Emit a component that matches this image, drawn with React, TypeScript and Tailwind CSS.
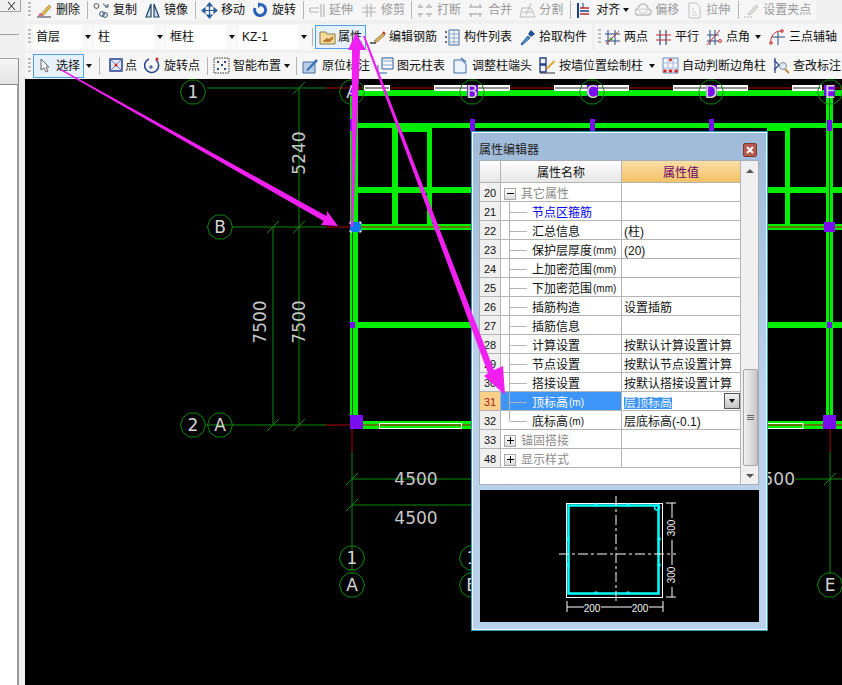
import type { ReactNode } from "react";
import clsx from "clsx";

const FONT = "font-['Liberation_Sans','Noto_Sans_CJK_SC',sans-serif]";

function Grip() {
  return <span className="h-[16px] w-[3px] shrink-0 bg-[repeating-linear-gradient(to_bottom,#bcbcbc_0px,#bcbcbc_2px,transparent_2px,transparent_4px)]" />;
}

function Sep({ cls }: { cls: string }) {
  return <span className={clsx("h-[18px] w-px shrink-0 bg-[#b4b4b4]", cls)} />;
}

function Caret({ cls }: { cls?: string }) {
  return <span className={clsx("h-0 w-0 shrink-0 border-x-[3px] border-t-[4px] border-x-transparent border-t-[#111]", cls)} />;
}

function Ico({ children }: { children: ReactNode }) {
  return (
    <svg width="17" height="17" viewBox="0 0 17 17" fill="none">
      {children}
    </svg>
  );
}

type ToolProps = { cls?: string; icon: ReactNode; label: string; gray?: boolean };

function Tool({ cls, icon, label, gray }: ToolProps) {
  return (
    <div className={clsx("flex shrink-0 items-center", cls)}>
      <span className="flex w-[20px] items-center">{icon}</span>
      <span className={clsx("whitespace-nowrap text-[12px] leading-none", gray ? "text-[#9a9a9a]" : "text-[#111]")}>{label}</span>
    </div>
  );
}

const icons = {
  erase: <Ico><path d="M1 15h14" stroke="#334" /><path d="M4 13L13 3l2 2-8 9z" fill="#e8b93c" stroke="#776" strokeWidth=".6" /><path d="M2 14l2-3 3 2z" fill="#d04a8a" /></Ico>,
  copy: <Ico><circle cx="3.5" cy="4" r="2.4" stroke="#555" /><circle cx="9" cy="12" r="2.4" stroke="#357" /><circle cx="12" cy="13" r="2.4" stroke="#357" /><path d="M10 2l5 3m0 0V2m0 3h-3" stroke="#357" /></Ico>,
  mirror: <Ico><path d="M7 2L2 15h5zM10 2l5 13h-5z" stroke="#246" strokeWidth="1.2" fill="#cfe0f2" /></Ico>,
  move: <Ico><path d="M8.5 1v15M1 8.5h15M8.5 1L6 4h5zM8.5 16L6 13h5zM1 8.5L4 6v5zM16 8.5L13 6v5z" stroke="#2a5f9e" fill="#2a5f9e" strokeWidth="1.2" /></Ico>,
  rotate: <Ico><path d="M8 2.5a5.5 5.5 0 1 1-5 3.5" stroke="#2a62b8" strokeWidth="3" /><path d="M6 0l4 3-4 3z" fill="#2a62b8" /></Ico>,
  extend: <Ico><path d="M1 6h9M1 10h9M1 6v4M12 2v13M15 2v13" stroke="#b5b5b5" strokeWidth="1.2" /></Ico>,
  trim: <Ico><path d="M1 6h14M1 10h14M6 2v13M10 2v13" stroke="#b5b5b5" strokeWidth="1.2" /></Ico>,
  split: <Ico><path d="M1 5h5M9 5h6M1 12h5M9 12h6M3 2v3M12 2v3M3 12v3M12 12v3" stroke="#b5b5b5" strokeWidth="1.4" /></Ico>,
  merge: <Ico><path d="M1 5h13M1 12h13M3 2v3M12 2v3M3 12v3M12 12v3" stroke="#b5b5b5" strokeWidth="1.4" /></Ico>,
  divide: <Ico><path d="M1 15h15L12 6H3zM3 10h10M12 1L7 13" stroke="#bcbcbc" /></Ico>,
  align: <Ico><path d="M2 1v15" stroke="#1c3f8c" strokeWidth="2" /><path d="M4 6h9M4 12h9" stroke="#c02828" strokeWidth="1.5" /><path d="M4 9h9" stroke="#1c3f8c" strokeWidth="1.5" /><path d="M7 1v5" stroke="#1c3f8c" /></Ico>,
  cloud: <Ico><path d="M3 13a3 3 0 0 1 0-6 5 5 0 0 1 10 0 3 3 0 0 1 0 6z" stroke="#bcbcbc" strokeWidth="1.4" /><path d="M6 11a2 2 0 0 1 1-4h3a2 2 0 0 1 0 4z" stroke="#cfcfcf" /></Ico>,
  stretch: <Ico><path d="M3 1h7l4 4v11H3z" stroke="#c0c0c0" /><path d="M6 7h2M6 10h4M6 13h5" stroke="#cfcfcf" /></Ico>,
  grippoint: <Ico><path d="M1 15h9" stroke="#bbb" strokeDasharray="2 1" /><path d="M5 12L13 3l2 2-8 8z" fill="#e4e4e4" stroke="#bbb" /></Ico>,
  prop: <Ico><path d="M1 3h6l1 2h8v10H1z" fill="#f6dc9a" stroke="#8a7a48" /><path d="M4 12l4-3 2 1 4-3v3l-3 3H5z" fill="#b57a2e" /></Ico>,
  rebar: <Ico><path d="M1 14h6" stroke="#333" strokeWidth="1.4" /><path d="M5 12L14 4l2 2-8 7z" fill="#e5b54a" stroke="#555" strokeWidth=".6" /><path d="M14 3l2 2" stroke="#c53030" strokeWidth="2" /></Ico>,
  list: <Ico><path d="M1 2h2v2H1zM1 7h2v2H1zM1 12h2v2H1z" fill="#667" /><path d="M5 1h10v15H5z" stroke="#3a6ea8" /><path d="M5 5h10M5 9h10M5 13h10M10 1v15" stroke="#8aa8c8" /></Ico>,
  pick: <Ico><path d="M2 15l7-8 2 2-8 7z" fill="#5b9ad8" stroke="#1d4f8a" /><path d="M9 5l3-4 4 4-4 3z" fill="#1d4f8a" /></Ico>,
  twopt: <Ico><path d="M4 1v15M11 1v15M1 5h15M1 12h15" stroke="#2a4a82" /><path d="M2 15L15 2" stroke="#c53030" /><circle cx="7" cy="10" r="1.6" fill="#4c9a3c" /></Ico>,
  parallel: <Ico><path d="M5 1v15M11 1v15" stroke="#2a4a82" strokeWidth="1.2" /><path d="M1 6h15M1 11h15" stroke="#c53030" strokeWidth="1.2" /></Ico>,
  angle: <Ico><path d="M4 1v15M9 1v15M1 6h12M1 12h12" stroke="#2a4a82" /><path d="M1 16L14 1" stroke="#c53030" /><circle cx="14" cy="12" r="1.5" stroke="#c53030" /></Ico>,
  arc: <Ico><path d="M9 2v14M3 8h13" stroke="#2a4a82" /><path d="M2 14a10 10 0 0 1 11-12" stroke="#c53030" /><circle cx="2" cy="14" r="1.3" stroke="#c53030" /><circle cx="13" cy="2" r="1.3" stroke="#c53030" /></Ico>,
  cursor: <svg width="10" height="15" viewBox="0 0 10 15"><path d="M1 1v11l3-2 2 4 2-1-2-4h3z" fill="#f4f4f4" stroke="#666" /></svg>,
  point: <Ico><path d="M2 2h12v12H2z" stroke="#24408a" strokeWidth="1.5" fill="#dfe7f6" /><path d="M2 2l12 12M14 2L2 14" stroke="#7788b0" /><circle cx="8" cy="8" r="1.5" fill="#d02020" /></Ico>,
  rotpt: <Ico><path d="M5 2a7 7 0 1 0 7 1" stroke="#24408a" strokeWidth="1.5" /><path d="M9 10h-4M7 8v4" stroke="#24408a" /><circle cx="13" cy="2" r="1.6" fill="#c53030" /></Ico>,
  smart: <Ico><path d="M1 1h15v15H1z" stroke="#333" strokeDasharray="1.5 1" /><path d="M4 5h2M11 5h2M4 12h2M11 12h2M8 8h2" stroke="#2a4a82" strokeWidth="2" /></Ico>,
  insitu: <Ico><path d="M1 5h12v11H1z" fill="#b9cee6" stroke="#4a6f9e" /><path d="M4 13L14 2l2 2-10 10z" fill="#3f74b8" /></Ico>,
  table: <Ico><path d="M5 1h11v11H5z" stroke="#2a5a9e" /><path d="M5 4h11M5 8h11" stroke="#88a8cc" /><path d="M1 8v8h9" stroke="#2a5a9e" /></Ico>,
  end: <Ico><path d="M2 3h7l5 4v9H2z" stroke="#3a6ea8" fill="#eef4fb" /><path d="M9 1l5 4" stroke="#3a6ea8" strokeWidth="1.5" /></Ico>,
  wall: <Ico><path d="M1 1h6v6H1zM1 8h6v7H1z" stroke="#24408a" strokeWidth="1.4" /><path d="M7 11L15 3l1 2-8 8z" fill="#e2a53a" /><path d="M1 16h15" stroke="#333" /></Ico>,
  auto: <Ico><path d="M1 1h15v15H1z" stroke="#6b8cc0" /><path d="M1 6h15M1 11h15M6 1v15M11 1v15" stroke="#a8bcdc" /><circle cx="3" cy="14" r="1.7" fill="#d02020" /><circle cx="8.5" cy="14" r="1.7" fill="#d02020" /><circle cx="14" cy="14" r="1.7" fill="#d02020" /><circle cx="8.5" cy="3" r="1.4" fill="#d02020" /></Ico>,
  check: <Ico><path d="M2 1v15M1 3l5 5-5 5" stroke="#24408a" strokeWidth="1.2" /><circle cx="10" cy="9" r="3.5" stroke="#889" fill="#dcebf8" /><path d="M12 12l4 4" stroke="#c08a3a" strokeWidth="2" /></Ico>,
};

function Combo({ label, cls }: { label: string; cls: string }) {
  return (
    <div className="flex h-[24px] shrink-0 items-stretch">
      <span className={clsx("flex items-center bg-white pl-[3px] text-[12px] text-[#111]", cls)}>{label}</span>
      <span className="flex w-[12px] items-center bg-[#f8f8f8] pl-[3px]"><Caret /></span>
    </div>
  );
}

function ToolRow1() {
  return (
    <div className="flex h-[20px] w-[791px] items-center bg-[#f6f6f7] pl-[3px]">
      <Grip />
      <Tool cls="ml-[5px]" icon={icons.erase} label="删除" />
      <Sep cls="ml-[7px]" />
      <Tool cls="ml-[5px]" icon={icons.copy} label="复制" />
      <Tool cls="ml-[7px]" icon={icons.mirror} label="镜像" />
      <Sep cls="ml-[7px]" />
      <Tool cls="ml-[5px]" icon={icons.move} label="移动" />
      <Tool cls="ml-[7px]" icon={icons.rotate} label="旋转" />
      <Sep cls="ml-[7px]" />
      <Tool cls="ml-[5px]" icon={icons.extend} label="延伸" gray />
      <Tool cls="ml-[8px]" icon={icons.trim} label="修剪" gray />
      <Sep cls="ml-[6px]" />
      <Tool cls="ml-[5px]" icon={icons.split} label="打断" gray />
      <Tool cls="ml-[7px]" icon={icons.merge} label="合并" gray />
      <Tool cls="ml-[7px]" icon={icons.divide} label="分割" gray />
      <Sep cls="ml-[7px]" />
      <Tool cls="ml-[5px]" icon={icons.align} label="对齐" />
      <Caret cls="ml-[3px]" />
      <Tool cls="ml-[6px]" icon={icons.cloud} label="偏移" gray />
      <Tool cls="ml-[7px]" icon={icons.stretch} label="拉伸" gray />
      <Sep cls="ml-[8px]" />
      <Tool cls="ml-[4px]" icon={icons.grippoint} label="设置夹点" gray />
    </div>
  );
}

function ToolRow2() {
  return (
    <div className="mt-[4px] flex h-[26px] items-center">
      <div className="flex h-full w-[567px] items-center bg-[#f6f6f7] pl-[3px]">
        <Grip />
        <div className="ml-[2px] flex items-center gap-px">
          <Combo label="首层" cls="w-[49px]" />
          <Combo label="柱" cls="w-[59px]" />
          <Combo label="框柱" cls="w-[59px]" />
          <Combo label="KZ-1" cls="w-[59px]" />
        </div>
        <Sep cls="ml-[2px]" />
        <div className="ml-[2px] flex h-[24px] w-[51px] items-center border border-[#4c9fe8] bg-[#e6f1fb] pl-[3px]">
          <span className="flex w-[19px] items-center">{icons.prop}</span>
          <span className="text-[12px] leading-none text-[#111]">属性</span>
        </div>
        <Tool cls="ml-[3px]" icon={icons.rebar} label="编辑钢筋" />
        <Tool cls="ml-[7px]" icon={icons.list} label="构件列表" />
        <Tool cls="ml-[7px]" icon={icons.pick} label="拾取构件" />
      </div>
      <div className="ml-[3px] flex h-full flex-1 items-center bg-[#f6f6f7] pl-[3px]">
        <Grip />
        <Tool cls="ml-[3px]" icon={icons.twopt} label="两点" />
        <Tool cls="ml-[7px]" icon={icons.parallel} label="平行" />
        <Tool cls="ml-[7px]" icon={icons.angle} label="点角" />
        <Caret cls="ml-[5px]" />
        <Tool cls="ml-[8px]" icon={icons.arc} label="三点辅轴" />
      </div>
    </div>
  );
}

function ToolRow3() {
  return (
    <div className="mt-[3px] flex h-[25px] items-center bg-[#f6f6f7] pl-[3px]">
      <Grip />
      <div className="ml-[2px] flex h-[24px] w-[51px] shrink-0 items-center border border-[#4c9fe8] bg-[#e6f1fb] pl-[6px]">
        <span className="flex w-[16px] items-center">{icons.cursor}</span>
        <span className="text-[12px] leading-none text-[#111]">选择</span>
      </div>
      <Caret cls="ml-[2px]" />
      <Sep cls="ml-[7px]" />
      <Tool cls="ml-[8px] w-[29px]" icon={icons.point} label="点" />
      <Tool cls="ml-[7px]" icon={icons.rotpt} label="旋转点" />
      <Sep cls="ml-[7px]" />
      <Tool cls="ml-[5px]" icon={icons.smart} label="智能布置" />
      <Caret cls="ml-[3px]" />
      <Sep cls="ml-[6px]" />
      <Tool cls="ml-[5px]" icon={icons.insitu} label="原位标注" />
      <Tool cls="ml-[7px]" icon={icons.table} label="图元柱表" />
      <Tool cls="ml-[7px]" icon={icons.end} label="调整柱端头" />
      <Tool cls="ml-[7px]" icon={icons.wall} label="按墙位置绘制柱" />
      <Caret cls="ml-[6px]" />
      <Tool cls="ml-[7px]" icon={icons.auto} label="自动判断边角柱" />
      <Tool cls="ml-[7px]" icon={icons.check} label="查改标注" />
    </div>
  );
}

function Bubble({ x, y, t }: { x: number; y: number; t: string }) {
  const pts = Array.from({ length: 10 }, (_, i) => {
    const a = (i / 10) * Math.PI * 2;
    return `${x + 12.5 * Math.cos(a)},${y + 12.5 * Math.sin(a)}`;
  }).join(" ");
  return (
    <g>
      <polygon points={pts} fill="none" stroke="#0b8a0b" />
      <text x={x} y={y + 6} textAnchor="middle" fontSize="17" fill="#d4d4d4" fontFamily="DejaVu Sans, sans-serif">{t}</text>
    </g>
  );
}

function Tick({ x, y }: { x: number; y: number }) {
  return <path d={`M${x - 6} ${y + 6}L${x + 6} ${y - 6}`} stroke="#0b8a0b" />;
}

function Dim({ x, y, t, rot, anchor }: { x: number; y: number; t: string; rot?: boolean; anchor?: "end" }) {
  return (
    <text
      x={x}
      y={y}
      transform={rot ? `rotate(-90 ${x} ${y})` : undefined}
      textAnchor={anchor ?? "middle"}
      dominantBaseline="central"
      fontSize="17"
      fill="#c8c8c8"
      fontFamily="DejaVu Sans, sans-serif"
    >
      {t}
    </text>
  );
}

const GREEN = "#00ee00";
const PURPLE = "#7a0cf0";
const RED = "#c00000";
const AXIS = "#0b8a0b";

function Canvas() {
  const whites: [number, number][] = [[364, 390], [434, 510], [554, 629], [673, 748], [792, 822]];
  const beamXs = [472, 592, 711];
  return (
    <svg className="block h-[606px] w-[817px] bg-black" viewBox="25 79 817 606">
      {/* axes */}
      <path d="M207 88H326M233 227H326M207 425H326M299 88V425M273 227V425M352 452V570M830 452V573M352 479H472M352 505H472M795 479H842" stroke={AXIS} fill="none" />
      <path d="M326 88H842M326 227H350M326 425H352M352 428V452M830 428V452" stroke={RED} fill="none" opacity=".9" />
      <Tick x={299} y={88} />
      <Tick x={273} y={227} />
      <Tick x={299} y={227} />
      <Tick x={273} y={425} />
      <Tick x={299} y={425} />
      <Tick x={352} y={479} />
      <Tick x={352} y={505} />
      <Tick x={830} y={479} />

      {/* beams */}
      <rect x="352" y="90" width="490" height="6" fill={GREEN} />
      <rect x="350" y="90" width="8" height="335" fill={GREEN} />
      <rect x="826" y="90" width="7" height="335" fill={GREEN} />
      <rect x="356" y="123" width="486" height="5" fill={GREEN} />
      <rect x="392" y="128" width="40" height="4" fill={GREEN} />
      <rect x="767" y="128" width="23" height="3" fill={GREEN} />
      <rect x="356" y="187" width="486" height="6" fill={GREEN} />
      <rect x="392" y="128" width="6" height="96" fill={GREEN} />
      <rect x="427" y="128" width="5" height="96" fill={GREEN} />
      <rect x="785" y="128" width="5" height="96" fill={GREEN} />
      <rect x="356" y="224" width="486" height="6" fill={GREEN} />
      <rect x="356" y="322" width="486" height="6" fill={GREEN} />
      <rect x="352" y="421" width="490" height="8" fill={GREEN} />
      <path d="M352.5 96V425M829.5 96V425" stroke="#064d06" />
      <path d="M356 227H842M352 425H842" stroke={RED} />

      {/* white bars */}
      {whites.map(([a, b]) => (
        <g key={a}>
          <rect x={a} y="85" width={b - a} height="6" fill="#fff" />
          <rect x={a + 1} y="87.5" width={b - a - 2} height="1" fill="#222" />
        </g>
      ))}
      <rect x="379.5" y="423.5" width="82" height="5" fill="none" stroke="#fff" />
      <rect x="760" y="423.5" width="43" height="5" fill="none" stroke="#fff" />

      {/* columns */}
      {beamXs.map((x) => (
        <g key={x}>
          <rect x={x - 5} y="85" width="11" height="11" fill={PURPLE} />
          <rect x={x - 2} y="119" width="5" height="12" fill={PURPLE} />
        </g>
      ))}
      <rect x="824" y="85" width="11" height="11" fill={PURPLE} />
      <rect x="827" y="120" width="5" height="11" fill={PURPLE} />
      <rect x="824" y="222" width="11" height="10" fill={PURPLE} />
      <rect x="827" y="322" width="5" height="6" fill={PURPLE} />
      <rect x="823" y="415" width="13" height="14" fill={PURPLE} />
      <rect x="350" y="85" width="5" height="11" fill={PURPLE} />
      <rect x="350" y="119" width="3" height="12" fill={PURPLE} />
      <rect x="350" y="322" width="5" height="6" fill={PURPLE} />
      <rect x="350" y="415" width="13" height="14" fill={PURPLE} />
      <rect x="350" y="222" width="11" height="10" fill="#0a78f0" />
      <path d="M350 224v-2h2M361 224v-2h-2M350 230v2h2M361 230v2h-2" stroke="#fff" fill="none" />

      {/* bubbles */}
      <Bubble x={193} y={92} t="1" />
      <Bubble x={220} y={227} t="B" />
      <Bubble x={193} y={425} t="2" />
      <Bubble x={220} y={425} t="A" />
      <Bubble x={352} y={92} t="A" />
      <Bubble x={472} y={92} t="B" />
      <Bubble x={592} y={92} t="C" />
      <Bubble x={711} y={92} t="D" />
      <Bubble x={830} y={92} t="E" />
      <Bubble x={352} y={558} t="1" />
      <Bubble x={352} y={585} t="A" />
      <Bubble x={472} y={558} t="1" />
      <Bubble x={472} y={585} t="B" />
      <Bubble x={830} y={585} t="E" />

      <Dim x={299} y={153} t="5240" rot />
      <Dim x={260} y={322} t="7500" rot />
      <Dim x={299} y={322} t="7500" rot />
      <Dim x={416} y={479} t="4500" />
      <Dim x={416} y={518} t="4500" />
      <Dim x={795} y={479} t="4500" anchor="end" />
    </svg>
  );
}

type Row = { no: number; name: string; unit?: string; value?: string; kind?: "group" | "groupClosed" | "link" | "selected"; last?: boolean };

const rows: Row[] = [
  { no: 20, name: "其它属性", kind: "group" },
  { no: 21, name: "节点区箍筋", kind: "link" },
  { no: 22, name: "汇总信息", value: "(柱)" },
  { no: 23, name: "保护层厚度", unit: "(mm)", value: "(20)" },
  { no: 24, name: "上加密范围", unit: "(mm)" },
  { no: 25, name: "下加密范围", unit: "(mm)" },
  { no: 26, name: "插筋构造", value: "设置插筋" },
  { no: 27, name: "插筋信息" },
  { no: 28, name: "计算设置", value: "按默认计算设置计算" },
  { no: 29, name: "节点设置", value: "按默认节点设置计算" },
  { no: 30, name: "搭接设置", value: "按默认搭接设置计算" },
  { no: 31, name: "顶标高", unit: "(m)", value: "层顶标高", kind: "selected" },
  { no: 32, name: "底标高", unit: "(m)", value: "层底标高(-0.1)", last: true },
  { no: 33, name: "锚固搭接", kind: "groupClosed" },
  { no: 48, name: "显示样式", kind: "groupClosed" },
];

function ExpandBox({ open }: { open: boolean }) {
  return (
    <span className="relative ml-[3px] flex h-[12px] w-[12px] shrink-0 items-center justify-center border border-[#a8a8a8] bg-gradient-to-b from-white to-[#dcdcdc]">
      <span className="h-px w-[7px] bg-black" />
      {!open && <span className="absolute h-[7px] w-px bg-black" />}
    </span>
  );
}

function PropRow({ row }: { row: Row }) {
  const selected = row.kind === "selected";
  const isGroup = row.kind === "group" || row.kind === "groupClosed";
  return (
    <div className="flex h-[19px] border-b border-[#b4b4b4] text-[12px] leading-none text-[#111]">
      <div className={clsx("flex w-[21px] shrink-0 items-center justify-center border-r border-[#b4b4b4] pt-[3px] text-[11px]", selected ? "bg-[#fdd08a] text-[#a02020]" : "bg-[#f0f0f0]")}>
        {row.no}
      </div>
      <div className={clsx("relative flex w-[121px] shrink-0 items-center border-r border-[#b4b4b4] pt-[3px]", selected && "bg-[#3d95f8] text-white")}>
        {isGroup ? (
          <>
            <ExpandBox open={row.kind === "group"} />
            <span className="ml-[5px] text-[#8c8c8c]">{row.name}</span>
          </>
        ) : (
          <>
            <span className={clsx("absolute left-[8px] top-0 w-px bg-[#b4b4b4]", row.last ? "h-[10px]" : "h-full")} />
            <span className="absolute left-[9px] top-[10px] h-px w-[17px] bg-[#b4b4b4]" />
            <span className={clsx("ml-[31px] whitespace-nowrap", row.kind === "link" && "text-[#0000ee]")}>{row.name}</span>
            {row.unit && <span className="ml-px text-[10px]">{row.unit}</span>}
          </>
        )}
      </div>
      <div className="relative flex flex-1 items-center pl-[2px] pt-[3px]">
        {selected ? (
          <>
            <span className="bg-[#3d95f8] text-[#e8f2ff]">{row.value}</span>
            <span className="absolute right-0 top-px flex h-[16px] w-[16px] items-center justify-center border border-[#555] bg-gradient-to-b from-[#f2f2f2] to-[#c4c4c4]">
              <Caret />
            </span>
          </>
        ) : (
          <span className="whitespace-nowrap">{row.value}</span>
        )}
      </div>
    </div>
  );
}

function PropGrid() {
  return (
    <div className="flex h-[325px] w-[280px] border border-[#a6aeb8] bg-white">
      <div className="w-[261px] shrink-0 border-r border-[#b4b4b4]">
        <div className="flex h-[22px] border-b border-[#b4b4b4] text-[12px] leading-none">
          <div className="w-[21px] shrink-0 border-r border-[#b4b4b4] bg-gradient-to-b from-white to-[#e6e6e6]" />
          <div className="flex w-[121px] shrink-0 items-center justify-center border-r border-[#b4b4b4] bg-gradient-to-b from-white to-[#e6e6e6] pt-[3px] text-[#111]">属性名称</div>
          <div className="flex flex-1 items-center justify-center bg-gradient-to-b from-[#fbdea6] to-[#f3c263] pt-[3px] text-[#660066]">属性值</div>
        </div>
        {rows.map((r) => (
          <PropRow key={r.no} row={r} />
        ))}
      </div>
      <div className="flex w-[17px] flex-col items-center bg-[#f0f0f0] pl-px pt-[8px]">
        <span className="h-0 w-0 border-x-[4px] border-b-[4px] border-x-transparent border-b-[#555]" />
        <div className="mt-[196px] flex h-[97px] w-[15px] flex-col items-center justify-center gap-px rounded-[2px] border border-[#a8a8a8] bg-gradient-to-r from-[#f0f0f0] to-[#c8c8c8]">
          <span className="h-px w-[7px] bg-[#666]" />
          <span className="h-px w-[7px] bg-[#666]" />
          <span className="h-px w-[7px] bg-[#666]" />
        </div>
        <span className="mt-[8px] h-0 w-0 border-x-[4px] border-t-[4px] border-x-transparent border-t-[#555]" />
      </div>
    </div>
  );
}

function Section() {
  const bars = [[596, 505], [628, 505], [568, 539], [568, 565], [659, 539], [659, 565], [596, 593], [628, 593]];
  return (
    <svg className="ml-px mt-[5px] block h-[132px] w-[279px] bg-black" viewBox="480 490 279 132">
      <rect x="566.5" y="503.5" width="96" height="94" fill="none" stroke="#fff" />
      <rect x="568.5" y="505.5" width="90" height="88" fill="none" stroke="#00ffff" strokeWidth="2.5" />
      {bars.map(([x, y]) => (
        <circle key={`${x}-${y}`} cx={x} cy={y} r="1.8" fill="#00ffff" />
      ))}
      <circle cx="657" cy="507.5" r="2.5" fill="none" stroke="#00ffff" strokeWidth="1.5" />
      <path d="M616 496V604M559 554H676" stroke="#fff" strokeDasharray="10 3 3 3" />
      <path d="M672 503V597M666 503H676M666 597H676M567 607H663M567 601V612M663 601V612" stroke="#fff" />
      <rect x="664" y="518" width="14" height="22" fill="#000" />
      <rect x="664" y="565" width="14" height="22" fill="#000" />
      <rect x="584" y="602" width="17" height="11" fill="#000" />
      <rect x="632" y="602" width="17" height="11" fill="#000" />
      <text x="671" y="528" transform="rotate(-90 671 528)" textAnchor="middle" dominantBaseline="central" fontSize="10" fill="#f2f2f2" fontFamily="Liberation Sans, sans-serif">300</text>
      <text x="671" y="575" transform="rotate(-90 671 575)" textAnchor="middle" dominantBaseline="central" fontSize="10" fill="#f2f2f2" fontFamily="Liberation Sans, sans-serif">300</text>
      <text x="592" y="608" textAnchor="middle" dominantBaseline="central" fontSize="10" fill="#f2f2f2" fontFamily="Liberation Sans, sans-serif">200</text>
      <text x="640" y="608" textAnchor="middle" dominantBaseline="central" fontSize="10" fill="#f2f2f2" fontFamily="Liberation Sans, sans-serif">200</text>
    </svg>
  );
}

function Dialog() {
  return (
    <div className="absolute left-[472px] top-[132px] h-[498px] w-[295px] border border-[#f4f8fc] bg-gradient-to-b from-[#9fbbd9] via-[#b9d1ea] to-[#b9d1ea] px-[6px] shadow-[0_0_0_1px_#2aa0b8]">
      <div className="flex h-[27px] items-center justify-between pr-[3px] pt-[7px]">
        <span className="text-[12px] leading-none text-[#222]">属性编辑器</span>
        <span className="flex h-[14px] w-[14px] items-center justify-center rounded-[2px] border border-[#7a3a34] bg-[#b8584e]">
          <svg width="8" height="8" viewBox="0 0 8 8"><path d="M1 1l6 6M7 1L1 7" stroke="#fff" strokeWidth="2" /></svg>
        </span>
      </div>
      <PropGrid />
      <Section />
    </div>
  );
}

function Arrows() {
  return (
    <svg className="pointer-events-none absolute inset-0 h-[685px] w-[842px]" viewBox="0 0 842 685">
      <g fill="#f020f0">
        <path d="M60 70L62 69.5L326.5 216L327 211L338 226L321 225L323.5 221z" />
        <path d="M351 227L353 227L360 50L366 50L356 33L348 50L352 50z" />
        <path d="M363 36L365 36L494 370L503 366L505 395L484 376L488 373z" />
      </g>
    </svg>
  );
}

function LeftPanel() {
  return (
    <div className="flex h-full w-[25px] shrink-0 flex-col bg-[#f0f0f0]">
      <div className="flex h-[12px] w-[21px] items-center justify-end border-b border-r border-[#a0a0a0] pr-[4px]">
        <svg width="9" height="8" viewBox="0 0 9 8"><path d="M1 0l7 8M8 0L1 8" stroke="#222" /></svg>
      </div>
      <div className="h-[23px] w-[19px] border-b border-[#a0a0a0]" />
      <div className="h-[24px] w-[19px] border-b border-[#a0a0a0]" />
      <div className="h-[26px] w-[19px] border-b border-r border-[#8c8c8c] bg-gradient-to-b from-[#f6f6f6] to-[#e4e4e4]" />
      <div className="w-[19px] flex-1 border-r-2 border-[#9a9a9a] bg-white" />
    </div>
  );
}

export default function App() {
  return (
    <div className={clsx("relative flex h-[685px] w-[842px] overflow-hidden bg-[#f0f0f0]", FONT)}>
      <LeftPanel />
      <div className="flex min-w-0 flex-1 flex-col">
        <ToolRow1 />
        <ToolRow2 />
        <ToolRow3 />
        <div className="mt-px">
          <Canvas />
        </div>
      </div>
      <Dialog />
      <Arrows />
    </div>
  );
}
